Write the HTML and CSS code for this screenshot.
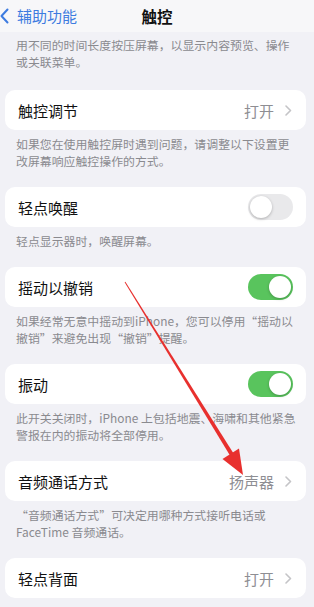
FILE: index.html
```html
<!DOCTYPE html>
<html lang="zh">
<head>
<meta charset="utf-8">
<link rel="stylesheet" href="styles.css">
</head>
<body>
<div class="page">
  <header class="nav">
    <div class="back">
      <svg class="back-icon" width="9" height="16" viewBox="0 0 9 16"><path d="M7.5 1.5 L1.5 8 L7.5 14.5" fill="none" stroke="#3d7be0" stroke-width="2" stroke-linecap="round" stroke-linejoin="round"/></svg>
      <span>辅助功能</span>
    </div>
    <div class="title">触控</div>
    <div></div>
  </header>

  <main class="content">
    <p class="note first">用不同的时间长度按压屏幕，以显示内容预览、操作<br>或关联菜单。</p>

    <div class="card">
      <span class="label">触控调节</span>
      <span class="value">打开<svg class="chev" width="7" height="11" viewBox="0 0 7 11"><path d="M1 1 L5.5 5.5 L1 10" fill="none" stroke="#c4c4c7" stroke-width="1.6" stroke-linecap="round" stroke-linejoin="round"/></svg></span>
    </div>
    <p class="note">如果您在使用触控屏时遇到问题，请调整以下设置更<br>改屏幕响应触控操作的方式。</p>

    <div class="card">
      <span class="label">轻点唤醒</span>
      <span class="toggle off"><span class="knob"></span></span>
    </div>
    <p class="note">轻点显示器时，唤醒屏幕。</p>

    <div class="card">
      <span class="label">摇动以撤销</span>
      <span class="toggle on"><span class="knob"></span></span>
    </div>
    <p class="note">如果经常无意中摇动到iPhone，您可以停用“摇动以<br>撤销”来避免出现“撤销”提醒。</p>

    <div class="card">
      <span class="label">振动</span>
      <span class="toggle on"><span class="knob"></span></span>
    </div>
    <p class="note">此开关关闭时，iPhone 上包括地震、海啸和其他紧急<br>警报在内的振动将全部停用。</p>

    <div class="card">
      <span class="label">音频通话方式</span>
      <span class="value">扬声器<svg class="chev" width="7" height="11" viewBox="0 0 7 11"><path d="M1 1 L5.5 5.5 L1 10" fill="none" stroke="#c4c4c7" stroke-width="1.6" stroke-linecap="round" stroke-linejoin="round"/></svg></span>
    </div>
    <p class="note">“音频通话方式”可决定用哪种方式接听电话或<br>FaceTime 音频通话。</p>

    <div class="card">
      <span class="label">轻点背面</span>
      <span class="value">打开<svg class="chev" width="7" height="11" viewBox="0 0 7 11"><path d="M1 1 L5.5 5.5 L1 10" fill="none" stroke="#c4c4c7" stroke-width="1.6" stroke-linecap="round" stroke-linejoin="round"/></svg></span>
    </div>
    <p class="note">轻点iPhone背面以快速执行操作。</p>
  </main>

  <svg class="arrow" width="314" height="607" viewBox="0 0 314 607">
    <polygon points="125.4,281.7 124.6,282.3 230.6,456.6 234.2,454.4" fill="#e8302e"/>
    <polygon points="243,475 222.5,459 239,448.5" fill="#e8302e"/>
  </svg>
</div>
</body>
</html>
```

FILE: styles.css
```css
* { box-sizing: border-box; }
html, body { margin: 0; padding: 0; }
body {
  background: #f1f1f6;
  font-family: "Noto Sans CJK SC", "Noto Sans", sans-serif;
  width: 314px;
  height: 607px;
  overflow: hidden;
}
.page { position: relative; width: 314px; height: 607px; overflow: hidden; }
.nav {
  height: 32px;
  background: #f7f7f9;
  display: grid;
  grid-template-columns: 1fr auto 1fr;
  align-items: center;
}
.back {
  display: flex;
  align-items: center;
  gap: 8px;
  color: #3d7be0;
  font-size: 15px;
  line-height: 20px;
}
.title {
  font-size: 15.5px;
  font-weight: 700;
  color: #111;
  line-height: 20px;
}
.content { padding: 0 8px 0 5px; }
.note {
  margin: 5px 0 18px;
  padding: 0 0 0 11px;
  font-size: 11.9px;
  line-height: 17px;
  color: #8a8a8f;
  white-space: nowrap;
}
.note.first { margin-top: 3.5px; margin-bottom: 20.5px; }
.card {
  height: 40px;
  background: #fff;
  border-radius: 10px;
  display: flex;
  align-items: center;
  justify-content: space-between;
  padding: 0 13px;
}
.label { font-size: 15px; color: #111; }
.value {
  display: flex;
  align-items: center;
  gap: 11px;
  font-size: 15px;
  color: #8e8e93;
  padding-right: 1px;
}
.toggle {
  width: 45px;
  height: 26px;
  border-radius: 13px;
  position: relative;
  flex: none;
}
.toggle.off { background: #e9e9eb; }
.toggle.on { background: #59c45d; }
.knob {
  position: absolute;
  top: 2px;
  width: 22px;
  height: 22px;
  border-radius: 50%;
  background: #fff;
  box-shadow: 0 1px 3px rgba(0,0,0,0.25);
}
.toggle.off .knob { left: 2px; }
.toggle.on .knob { right: 2px; }
.arrow { position: absolute; left: 0; top: 0; pointer-events: none; }
```
